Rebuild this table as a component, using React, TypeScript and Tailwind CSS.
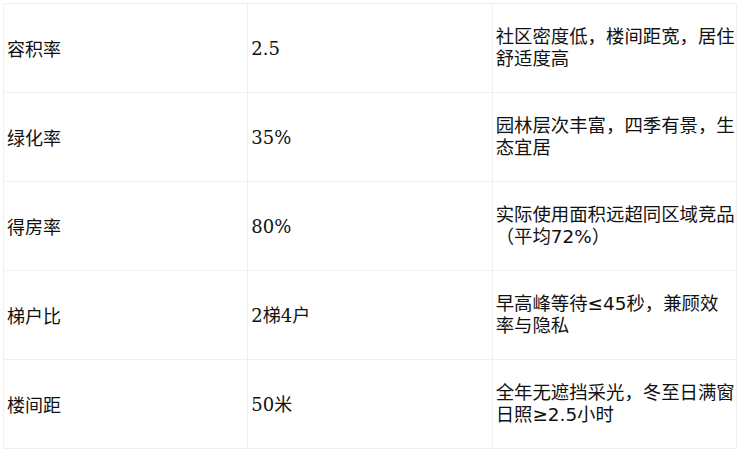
import React from "react";

type Row = { name: string; value: string; note: string };

const rows: Row[] = [
  { name: "容积率", value: "2.5", note: "社区密度低，楼间距宽，居住舒适度高" },
  { name: "绿化率", value: "35%", note: "园林层次丰富，四季有景，生态宜居" },
  { name: "得房率", value: "80%", note: "实际使用面积远超同区域竞品（平均72%）" },
  { name: "梯户比", value: "2梯4户", note: "早高峰等待≤45秒，兼顾效率与隐私" },
  { name: "楼间距", value: "50米", note: "全年无遮挡采光，冬至日满窗日照≥2.5小时" },
];

const App: React.FC = () => {
  return (
    <div className="w-[740px] h-[450px] bg-white p-[3px] text-[18px] text-[#111]">
      <table className="w-full table-fixed border-collapse">
        <tbody>
          {rows.map((row) => (
            <tr key={row.name}>
              {/* 指标名 */}
              <td className="w-1/3 h-[89px] border border-[#eef0f3] px-[3px] align-middle font-['Noto_Sans_CJK_SC',sans-serif]">
                {row.name}
              </td>
              <td className="w-1/3 h-[89px] border border-[#eef0f3] px-[3px] align-middle font-['DejaVu_Serif','Noto_Sans_CJK_SC',serif]">
                {row.value}
              </td>
              {/* 说明 */}
              <td className="w-1/3 h-[89px] border border-[#eef0f3] pl-[3px] pr-[1px] align-middle text-[18.4px] leading-[22px] font-['DejaVu_Sans','Noto_Sans_CJK_SC',sans-serif]">
                {row.note}
              </td>
            </tr>
          ))}
        </tbody>
      </table>
    </div>
  );
};

export default App;
